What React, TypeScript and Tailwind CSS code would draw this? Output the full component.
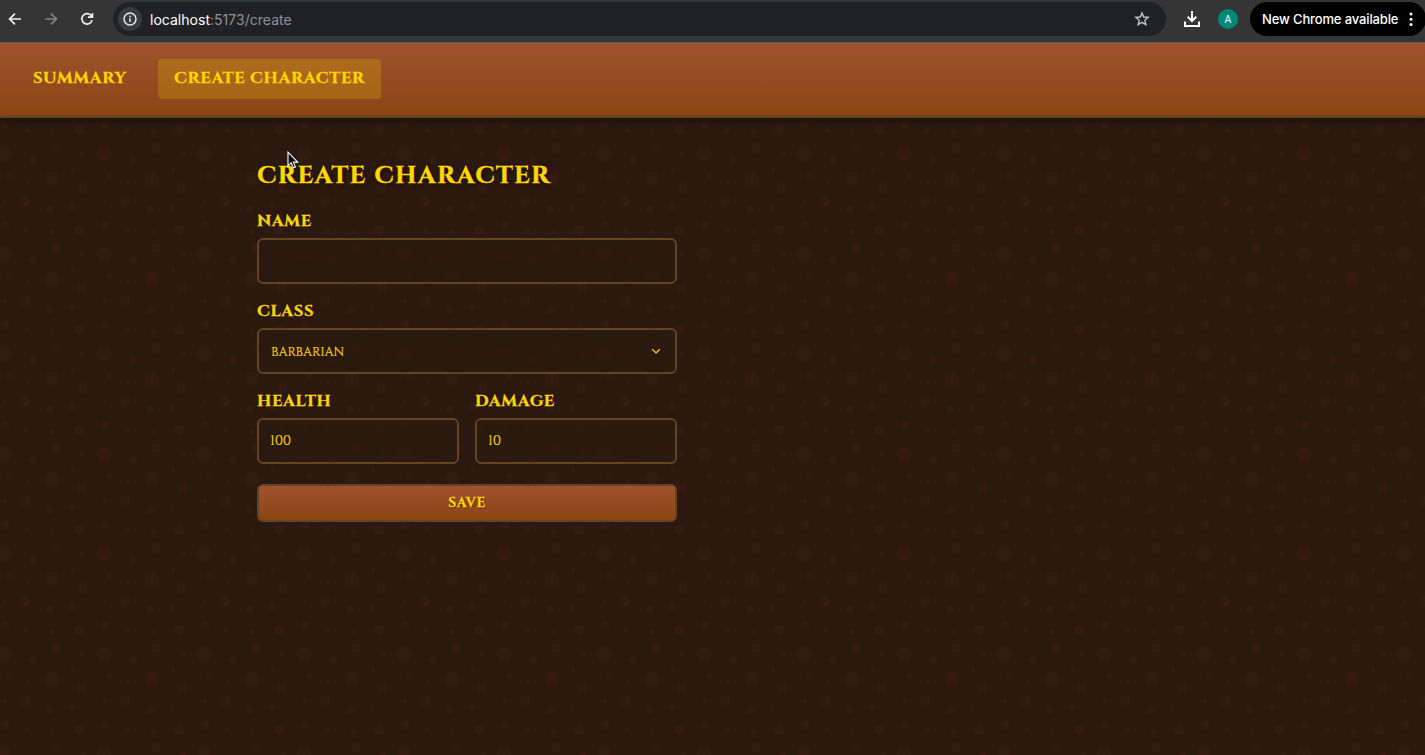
import type { ReactNode } from "react";

const serif = "font-['Cinzel','Liberation_Serif',serif]";

const BUBBLES =
  "M11 18c3.866 0 7-3.134 7-7s-3.134-7-7-7-7 3.134-7 7 3.134 7 7 7zm48 25c3.866 0 7-3.134 7-7s-3.134-7-7-7-7 3.134-7 7 3.134 7 7 7zm-43-7c1.657 0 3-1.343 3-3s-1.343-3-3-3-3 1.343-3 3 1.343 3 3 3zm63 31c1.657 0 3-1.343 3-3s-1.343-3-3-3-3 1.343-3 3 1.343 3 3 3zM34 90c1.657 0 3-1.343 3-3s-1.343-3-3-3-3 1.343-3 3 1.343 3 3 3zm56-76c1.657 0 3-1.343 3-3s-1.343-3-3-3-3 1.343-3 3 1.343 3 3 3zM12 86c2.21 0 4-1.79 4-4s-1.79-4-4-4-4 1.79-4 4 1.79 4 4 4zm28-65c2.21 0 4-1.79 4-4s-1.79-4-4-4-4 1.79-4 4 1.79 4 4 4zm23-11c2.76 0 5-2.24 5-5s-2.24-5-5-5-5 2.24-5 5 2.24 5 5 5zm-6 60c2.21 0 4-1.79 4-4s-1.79-4-4-4-4 1.79-4 4 1.79 4 4 4zm29 22c2.76 0 5-2.24 5-5s-2.24-5-5-5-5 2.24-5 5 2.24 5 5 5zM32 63c2.76 0 5-2.24 5-5s-2.24-5-5-5-5 2.24-5 5 2.24 5 5 5zm57-13c2.76 0 5-2.24 5-5s-2.24-5-5-5-5 2.24-5 5 2.24 5 5 5zm-9-21c1.105 0 2-.895 2-2s-.895-2-2-2-2 .895-2 2 .895 2 2 2zM60 91c1.105 0 2-.895 2-2s-.895-2-2-2-2 .895-2 2 .895 2 2 2zM35 41c1.105 0 2-.895 2-2s-.895-2-2-2-2 .895-2 2 .895 2 2 2zM12 60c1.105 0 2-.895 2-2s-.895-2-2-2-2 .895-2 2 .895 2 2 2z";

function BrowserBar() {
  return (
    <div className="flex h-[43px] shrink-0 items-start overflow-hidden border-b border-[#5c5e60] bg-[#353535] pt-0.5 font-['Inter',sans-serif]">
      <div className="flex h-[34px] w-[113px] shrink-0 items-center">
        <svg className="ml-1.5 h-[18px] w-[18px]" viewBox="0 0 18 18" fill="none" stroke="#f1f1f1" strokeWidth="1.7">
          <path d="M15 9H3.8M9 3.6 3.6 9 9 14.4" />
        </svg>
        <svg className="ml-[18px] h-[18px] w-[18px]" viewBox="0 0 18 18" fill="none" stroke="#828282" strokeWidth="1.7">
          <path d="M3 9h11.2M9 3.6 14.4 9 9 14.4" />
        </svg>
        <svg className="ml-[18px] h-[18px] w-[18px]" viewBox="0 0 18 18" fill="none" stroke="#f1f1f1" strokeWidth="1.7">
          <path d="M14.1 10.1A5.2 5.2 0 1 1 12.9 5.3L14.2 6.7" />
          <path d="M14.4 2.9v4.3h-4.5" />
        </svg>
      </div>
      <div className="flex h-[34px] w-[1053px] shrink-0 items-center rounded-full bg-[#202124] pl-[5px]">
        <span className="flex h-6 w-6 items-center justify-center rounded-full bg-[#3a3b3d]">
          <svg className="h-4 w-4" viewBox="0 0 16 16" fill="none" stroke="#e8e8e8" strokeWidth="1.5">
            <circle cx="8" cy="8" r="6" />
            <path d="M8 7.2v3.9M8 4.7v1.6" />
          </svg>
        </span>
        <span className="ml-2 text-[14px] tracking-[0.02px] text-[#919395]">
          <span className="text-white">localhost</span>:5173/create
        </span>
        <svg className="mr-4 ml-auto h-4 w-4" viewBox="0 0 16 16" fill="none" stroke="#c7c7c7" strokeWidth="1.35">
          <path d="m8 1.9 1.75 4.1 4.45.4-3.4 2.95 1.05 4.35L8 11.4l-3.85 2.3L5.2 9.35 1.8 6.4l4.45-.4z" />
        </svg>
      </div>
      <div className="flex h-[34px] w-[84px] shrink-0 items-center">
        <svg className="ml-[17px] h-[18px] w-[18px]" viewBox="0 0 18 18" fill="none" stroke="#ffffff" strokeWidth="2">
          <path d="M9 1v9.5M4.7 6.7 9 11l4.3-4.3M2 11.5V16h14v-4.5" />
        </svg>
        <span className="ml-[17px] flex h-5 w-5 items-center justify-center rounded-full bg-[#00897b] text-[10px] text-white">A</span>
      </div>
      <div className="flex h-[34px] w-[176px] shrink-0 items-center rounded-full bg-black pl-3 text-[13px] font-medium text-white">
        <span className="w-[137px] pt-px tracking-[-0.13px] whitespace-nowrap">New Chrome available</span>
        <svg className="ml-2.5 h-4 w-1" viewBox="0 0 4 16" fill="#ffffff">
          <circle cx="2" cy="3" r="1.5" />
          <circle cx="2" cy="8.2" r="1.5" />
          <circle cx="2" cy="13.4" r="1.5" />
        </svg>
      </div>
    </div>
  );
}

function Field({ label, children }: { label: string; children: ReactNode }) {
  return (
    <label className="flex flex-1 flex-col gap-1.5">
      <span className="h-6 pt-px text-[16.5px] leading-6 font-bold tracking-[0.68px] [-webkit-text-stroke:0.35px_#ffd700]">
        {label}
      </span>
      {children}
    </label>
  );
}

const control =
  "h-[46px] w-full appearance-none rounded-md border-2 border-[#654321] bg-[#2b190f]/80 outline-none";

export default function App() {
  return (
    <div className="flex h-[755px] w-[1425px] flex-col overflow-hidden bg-[#2b190f]">
      <BrowserBar />
      <div className={`relative isolate flex flex-1 flex-col text-[#ffd700] ${serif}`}>
        <svg className="absolute inset-0 -z-10 h-full w-full" aria-hidden="true">
          <defs>
            <pattern id="bubbles" x="-7" y="0" width="100" height="100" patternUnits="userSpaceOnUse">
              <path d={BUBBLES} fill="#331b13" fillRule="evenodd" />
            </pattern>
          </defs>
          <rect width="100%" height="100%" fill="url(#bubbles)" />
        </svg>
        <nav className="flex h-[75px] shrink-0 items-start gap-4 border-b-[3px] border-[#654321] bg-linear-to-b from-[#a0522d] to-[#8b4513] px-4 pt-4 text-[16.5px] font-bold tracking-[0.68px] shadow-[0_4px_6px_rgba(0,0,0,0.3)] [-webkit-text-stroke:0.35px_#ffd700]">
          <a className="flex h-10 w-[126px] items-center rounded px-[17px] pb-0.5 whitespace-nowrap">SUMMARY</a>
          <a className="flex h-10 w-[223px] items-center rounded bg-[#ffd700]/20 px-4 pb-0.5 whitespace-nowrap">CREATE CHARACTER</a>
        </nav>
        <main className="ml-[257px] flex w-[420px] flex-col pt-10">
          <h1 className="h-[35px] text-[25px] leading-[35px] font-bold tracking-[1.32px] whitespace-nowrap [-webkit-text-stroke:0.45px_#ffd700] [text-shadow:2px_2px_4px_rgba(0,0,0,0.5)]">
            CREATE CHARACTER
          </h1>
          <form className="mt-[15px] flex flex-col gap-3.5">
            <Field label="NAME">
              <input className={`${control} px-3`} />
            </Field>
            <Field label="CLASS">
              <span className="relative flex">
                <select className={`${control} px-3 pt-0.5 text-[12.67px] [-webkit-text-stroke:0.2px_#ffd700]`} defaultValue="BARBARIAN">
                  <option>BARBARIAN</option>
                </select>
                <svg className="absolute top-[19px] right-4 h-2 w-2.5" viewBox="0 0 10 8" fill="none" stroke="#ffd700" strokeWidth="1.2">
                  <path d="m1.2 2.2 3.8 3.7 3.8-3.7" />
                </svg>
              </span>
            </Field>
            <div className="flex gap-4">
              <Field label="HEALTH">
                <input className={`${control} px-[11px] pb-px text-[14px] tracking-[-0.1px] [-webkit-text-stroke:0.2px_#ffd700]`} defaultValue="100" />
              </Field>
              <Field label="DAMAGE">
                <input className={`${control} px-[11px] pb-px text-[14px] tracking-[-0.1px] [-webkit-text-stroke:0.2px_#ffd700]`} defaultValue="10" />
              </Field>
            </div>
            <button
              type="button"
              className="mt-1.5 h-[38px] rounded-md border-2 border-[#654321] bg-linear-to-b from-[#a0522d] to-[#8b4513] text-[13.7px] font-bold tracking-[0.7px] [-webkit-text-stroke:0.3px_#ffd700] [text-shadow:1px_1px_2px_rgba(0,0,0,0.5)]"
            >
              SAVE
            </button>
          </form>
        </main>
        <svg className="absolute top-[108px] left-[287px] h-[19px] w-3" viewBox="0 0 12 19" fill="#0b0b0b" stroke="#ffffff" strokeWidth="1.1">
          <path d="M1 1.2v13.7l3.2-3 2.1 4.9 2.2-.9-2.1-4.8h4.3z" />
        </svg>
      </div>
    </div>
  );
}
